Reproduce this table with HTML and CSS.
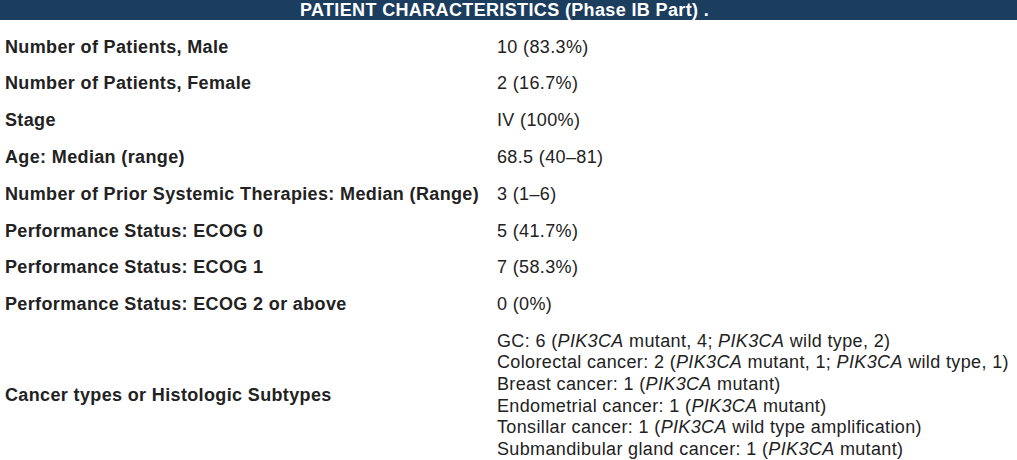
FILE: index.html
```html
<!DOCTYPE html>
<html lang="en">
<head>
<meta charset="utf-8">
<title>Patient Characteristics</title>
<link rel="stylesheet" href="styles.css">
</head>
<body>
<div class="header">PATIENT CHARACTERISTICS (Phase IB Part) .</div>
<table class="chars">
  <tbody>
    <tr><th>Number of Patients, Male</th><td>10 (83.3%)</td></tr>
    <tr><th>Number of Patients, Female</th><td>2 (16.7%)</td></tr>
    <tr><th>Stage</th><td>IV (100%)</td></tr>
    <tr><th>Age: Median (range)</th><td>68.5 (40–81)</td></tr>
    <tr><th>Number of Prior Systemic Therapies: Median (Range)</th><td>3 (1–6)</td></tr>
    <tr><th>Performance Status: ECOG 0</th><td>5 (41.7%)</td></tr>
    <tr><th>Performance Status: ECOG 1</th><td>7 (58.3%)</td></tr>
    <tr><th>Performance Status: ECOG 2 or above</th><td>0 (0%)</td></tr>
    <tr>
      <th>Cancer types or Histologic Subtypes</th>
      <td>GC: 6 (<i>PIK3CA</i> mutant, 4; <i>PIK3CA</i> wild type, 2)<br>
      Colorectal cancer: 2 (<i>PIK3CA</i> mutant, 1; <i>PIK3CA</i> wild type, 1)<br>
      Breast cancer: 1 (<i>PIK3CA</i> mutant)<br>
      Endometrial cancer: 1 (<i>PIK3CA</i> mutant)<br>
      Tonsillar cancer: 1 (<i>PIK3CA</i> wild type amplification)<br>
      Submandibular gland cancer: 1 (<i>PIK3CA</i> mutant)</td>
    </tr>
  </tbody>
</table>
</body>
</html>
```

FILE: styles.css
```css
html, body {
  margin: 0;
  padding: 0;
  background: #ffffff;
}
body {
  font-family: "Liberation Sans", Arial, sans-serif;
  font-size: 18px;
  letter-spacing: 0.36px;
  color: #222222;
  overflow: hidden;
}
.header {
  background: #1b3d5e;
  color: #ffffff;
  font-weight: bold;
  text-align: center;
  height: 20px;
  line-height: 20px;
  margin-bottom: 9px;
  padding-right: 8px;
}
.chars {
  border-collapse: collapse;
  width: 100%;
}
.chars th,
.chars td {
  padding: 7.6px 5px;
  line-height: 21.6px;
  vertical-align: middle;
  text-align: left;
}
.chars th {
  width: 482px;
  font-weight: bold;
}
.chars td {
  font-weight: normal;
}
```
